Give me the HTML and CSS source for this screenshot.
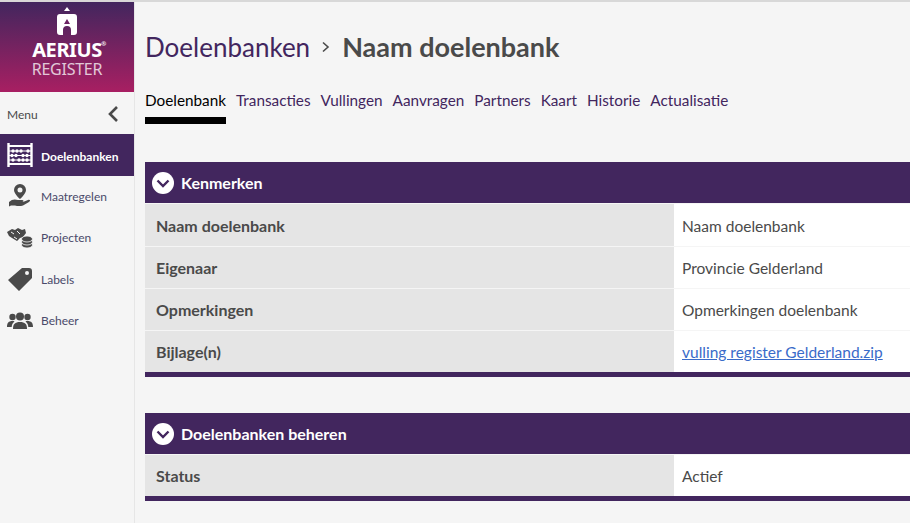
FILE: index.html
```html
<!DOCTYPE html>
<html lang="nl">
<head>
<meta charset="utf-8">
<title>Naam doelenbank</title>
<link rel="stylesheet" href="styles.css">
</head>
<body>
<div class="app">
  <aside class="sidebar">
    <div class="logo">
      <svg class="logo-mark" width="24" height="30" viewBox="0 0 24 30"><path d="M12 0l3 4H9z" fill="#fff"/><path d="M5 7h14a3 3 0 0 1 3 3v15a3 3 0 0 1-3 3h-3v-5a4 4 0 0 0-8 0v5H5a3 3 0 0 1-3-3V10a3 3 0 0 1 3-3z" fill="#fff"/><path d="M12 12l3 5H9z" fill="#6b2263"/></svg>
      <div class="logo-name">AERIUS<sup class="reg">®</sup></div>
      <div class="logo-sub">REGISTER</div>
    </div>
    <div class="menu-head">
      <span>Menu</span>
      <svg width="12" height="18" viewBox="0 0 12 18"><path d="M10 2L3 9l7 7" fill="none" stroke="#4a4a4a" stroke-width="2.6"/></svg>
    </div>
    <nav class="nav">
      <a class="nav-item active">
        <svg width="26" height="24" viewBox="0 0 26 24"><g fill="none" stroke="#fff"><path d="M1.500 0v24M24.500 0v24" stroke-width="2.400"/><path d="M1 3h24M1 21h24" stroke-width="2"/><path d="M2 8h22M2 12.500h22M2 17h22" stroke-width="1"/></g><g fill="#fff"><circle cx="6" cy="8" r="1.700"/><circle cx="10" cy="8" r="1.700"/><circle cx="14" cy="8" r="1.700"/><circle cx="21" cy="8" r="1.700"/><circle cx="5" cy="12.500" r="1.700"/><circle cx="9" cy="12.500" r="1.700"/><circle cx="16" cy="12.500" r="1.700"/><circle cx="20" cy="12.500" r="1.700"/><circle cx="6" cy="17" r="1.700"/><circle cx="12" cy="17" r="1.700"/><circle cx="16" cy="17" r="1.700"/><circle cx="20" cy="17" r="1.700"/></g></svg>
        <span>Doelenbanken</span>
      </a>
      <a class="nav-item">
        <svg width="26" height="24" viewBox="0 0 26 24"><path fill-rule="evenodd" d="M13 0a6 6 0 0 1 6 6c0 4-6 9-6 9s-6-5-6-9a6 6 0 0 1 6-6zm0 3.500a2.500 2.500 0 1 0 0 5 2.500 2.500 0 0 0 0-5z" fill="#4a4a4a"/><path d="M2 18c3-3 6-3 9-2h4c2 0 2 2 0 2h-3 4l5-2c2-.5 3 .5 1 2l-6 3.500c-3 1-6 .5-8 0H4l-2 1z" fill="#4a4a4a"/></svg>
        <span>Maatregelen</span>
      </a>
      <a class="nav-item">
        <svg width="26" height="22" viewBox="0 0 26 22"><path d="M0 5l5-3 3 1 3-2 4 2 3-1 1 4-3 4-3 1-3 3-5-3-3-2z" fill="#4a4a4a"/><path d="M4 5l3 2M10 4l3 3M7 10l3 2" stroke="#f5f5f5" stroke-width="1"/><g fill="#4a4a4a" stroke="#f5f5f5" stroke-width=".8"><ellipse cx="20" cy="18" rx="5.500" ry="3"/><ellipse cx="20" cy="15" rx="5.500" ry="3"/><ellipse cx="20" cy="12" rx="5.500" ry="3"/></g></svg>
        <span>Projecten</span>
      </a>
      <a class="nav-item">
        <svg width="26" height="24" viewBox="0 0 26 24"><path fill-rule="evenodd" d="M15 1h7a3 3 0 0 1 3 3v7L12 24 1 13zm5 3a2 2 0 1 0 0 4 2 2 0 0 0 0-4z" fill="#4a4a4a"/></svg>
        <span>Labels</span>
      </a>
      <a class="nav-item">
        <svg width="26" height="18" viewBox="0 0 26 18"><g fill="#4a4a4a"><circle cx="13" cy="4.500" r="4"/><path d="M6 17c0-5 2-7 7-7s7 2 7 7z"/><circle cx="5.500" cy="5" r="3.200"/><path d="M0 15c0-4 1.500-6 5.500-6 1 0 1.500 0 2 .5C5.500 11 4.800 13 4.700 15z"/><circle cx="20.500" cy="5" r="3.200"/><path d="M26 15c0-4-1.500-6-5.500-6-1 0-1.500 0-2 .5 2 1.500 2.700 3.500 2.800 5.500z"/></g></svg>
        <span>Beheer</span>
      </a>
    </nav>
  </aside>
  <main class="main">
    <h1 class="crumb">
      <a class="crumb-link">Doelenbanken</a>
      <svg class="crumb-sep" width="10" height="12" viewBox="0 0 10 12"><path d="M2 1.500l5 4.500-5 4.500" fill="none" stroke="#4a4a4a" stroke-width="1.600"/></svg>
      <span class="crumb-current">Naam doelenbank</span>
    </h1>
    <div class="tabs">
      <a class="tab active">Doelenbank</a>
      <a class="tab">Transacties</a>
      <a class="tab">Vullingen</a>
      <a class="tab">Aanvragen</a>
      <a class="tab">Partners</a>
      <a class="tab">Kaart</a>
      <a class="tab">Historie</a>
      <a class="tab">Actualisatie</a>
    </div>
    <section class="panel">
      <header class="panel-head">
        <svg width="22" height="22" viewBox="0 0 22 22"><circle cx="11" cy="11" r="11" fill="#fff"/><path d="M5.500 8.500L11 14l5.500-5.500" fill="none" stroke="#42265e" stroke-width="2.400"/></svg>
        <span>Kenmerken</span>
      </header>
      <div class="row"><div class="label">Naam doelenbank</div><div class="value">Naam doelenbank</div></div>
      <div class="row"><div class="label">Eigenaar</div><div class="value">Provincie Gelderland</div></div>
      <div class="row"><div class="label">Opmerkingen</div><div class="value">Opmerkingen doelenbank</div></div>
      <div class="row"><div class="label">Bijlage(n)</div><div class="value"><a class="file">vulling register Gelderland.zip</a></div></div>
    </section>
    <section class="panel">
      <header class="panel-head">
        <svg width="22" height="22" viewBox="0 0 22 22"><circle cx="11" cy="11" r="11" fill="#fff"/><path d="M5.500 8.500L11 14l5.500-5.500" fill="none" stroke="#42265e" stroke-width="2.400"/></svg>
        <span>Doelenbanken beheren</span>
      </header>
      <div class="row row-single"><div class="label">Status</div><div class="value">Actief</div></div>
    </section>
  </main>
</div>
</body>
</html>
```
FILE: styles.css
```css
* { box-sizing: border-box; }
html, body { margin: 0; height: 100%; overflow: hidden; }
body { font-family: Lato, "Noto Sans", sans-serif; color: #4a4a4a; background: #f5f5f5; }
.app { display: flex; height: 523px; border-top: 2px solid #d8d8d8; }
.sidebar { width: 135px; flex: none; background: #f5f5f5; border-right: 1px solid #e6e6e6; }
.logo { height: 90px; background: linear-gradient(#42265e, #a81f62); display: flex; flex-direction: column; align-items: center; color: #fff; padding-top: 5px; }
.logo-mark { display: block; }
.logo-name { font-family: "Noto Sans", sans-serif; font-size: 20px; font-weight: 700; line-height: 20px; margin-top: 3px; letter-spacing: -.4px; position: relative; }
.reg { position: absolute; font-size: 6px; line-height: 8px; top: 0; right: -4px; }
.logo-sub { font-family: "Noto Sans", sans-serif; font-size: 16px; line-height: 16px; margin-top: 1px; font-weight: 400; opacity: .75; letter-spacing: -.25px; }
.menu-head { height: 42px; display: flex; align-items: center; justify-content: space-between; padding: 2px 15px 0 7px; font-size: 12px; }
.nav { display: flex; flex-direction: column; }
.nav-item { height: 41.500px; display: flex; align-items: center; gap: 8px; padding: 0 0 0 7px; font-size: 12px; color: #4a4a6a; }
.nav-item svg { flex: none; }
.nav-item.active { background: #42265e; color: #fff; font-weight: 700; padding-top: 3px; }
.nav-item.active svg { margin-top: -3px; }
.main { flex: 1; min-width: 0; padding: 0 0 0 10px; }
.crumb { margin: 0; height: 89px; display: flex; align-items: center; gap: 11px; font-size: 26px; font-weight: 400; }
.crumb-link { color: #42265e; }
.crumb-sep { flex: none; }
.crumb-current { font-size: 27px; font-weight: 700; }
.tabs { display: flex; gap: 10px; height: 33px; font-size: 15.300px; margin-bottom: 38px; }
.tab { color: #42265e; line-height: 19px; height: 33px; }
.tab.active { color: #000; border-bottom: 7px solid #000; }
.panel { border-bottom: 5px solid #42265e; margin-bottom: 36px; }
.panel-head { height: 42px; background: #42265e; border-bottom: 1px solid #f5f5f5; display: flex; align-items: center; gap: 7px; padding-left: 7px; color: #fff; font-size: 16px; font-weight: 700; }
.row { display: flex; height: 42px; }
.row + .row { border-top: 1px solid #f5f5f5; }
.row-single { height: 41px; }
.label { width: 529px; flex: none; background: #e5e5e5; padding: 1px 0 0 11px; display: flex; align-items: center; font-size: 16px; font-weight: 700; }
.row + .row .label, .row-single .label { padding-top: 0; }
.value { flex: 1; background: #fff; padding: 1px 0 0 8px; display: flex; align-items: center; font-size: 15.500px; }
.file { color: #3a6bc9; text-decoration: underline; }
```
